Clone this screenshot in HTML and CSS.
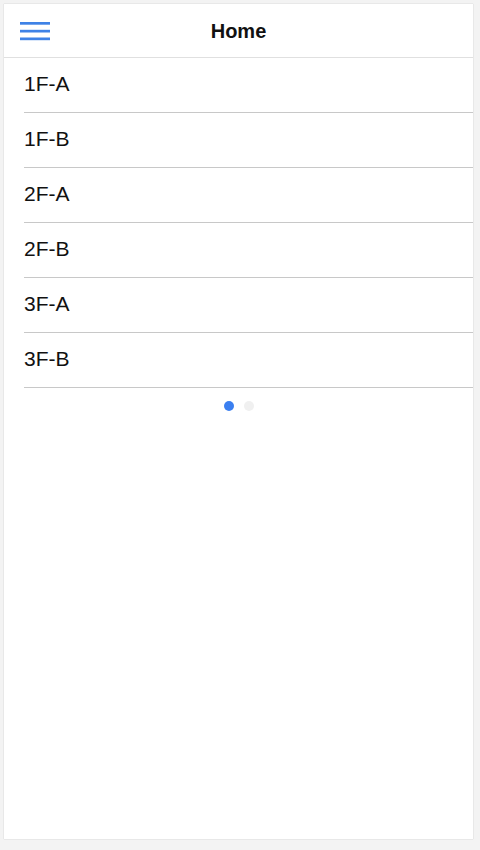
FILE: index.html
```html
<!DOCTYPE html>
<html>
<head>
<meta charset="utf-8">
<link rel="stylesheet" href="styles.css">
</head>
<body>
<div class="card">
  <header class="header">
    <button class="menu" aria-label="menu">
      <svg width="30" height="19" viewBox="0 0 30 19"><rect x="0" y="0" width="30" height="2.7" fill="#3f82e6"/><rect x="0" y="7.8" width="30" height="2.7" fill="#3f82e6"/><rect x="0" y="15.5" width="30" height="2.7" fill="#3f82e6"/></svg>
    </button>
    <h1 class="title">Home</h1>
  </header>
  <ul class="list">
    <li class="item">1F-A</li>
    <li class="item">1F-B</li>
    <li class="item">2F-A</li>
    <li class="item">2F-B</li>
    <li class="item">3F-A</li>
    <li class="item">3F-B</li>
  </ul>
  <div class="dots">
    <span class="dot active"></span>
    <span class="dot"></span>
  </div>
</div>
</body>
</html>
```
FILE: styles.css
```css
html, body { margin: 0; padding: 0; }
body {
  background: #f3f3f3;
  font-family: "Liberation Sans", Arial, sans-serif;
  width: 480px;
  height: 850px;
  padding: 4px 7px 11px 4px;
  box-sizing: border-box;
}
.card {
  background: #fff;
  height: 835px;
  box-shadow: 0 0 1px 0 rgba(0,0,0,0.25);
  display: flex;
  flex-direction: column;
}
.header {
  position: relative;
  box-sizing: border-box;
  height: 54px;
  padding-top: 2px;
  border-bottom: 1px solid #e0e0e0;
  display: flex;
  align-items: center;
  justify-content: center;
}
.menu {
  position: absolute;
  left: 16px;
  top: 18px;
  border: 0;
  background: none;
  padding: 0;
  width: 30px;
  height: 19px;
  display: block;
}
.menu svg { display: block; }
.title {
  margin: 0;
  font-size: 20px;
  font-weight: bold;
  color: #111;
}
.list {
  list-style: none;
  margin: 0;
  padding: 0 0 0 20px;
}
.item {
  height: 54px;
  line-height: 51px;
  border-bottom: 1px solid #c8c8c8;
  font-size: 21px;
  color: #111;
}
.dots {
  display: flex;
  justify-content: center;
  gap: 10px;
  margin-top: 13px;
}
.dot {
  width: 10px;
  height: 10px;
  border-radius: 50%;
  background: #f0f0f0;
}
.dot.active { background: #3b7ff0; }
```
